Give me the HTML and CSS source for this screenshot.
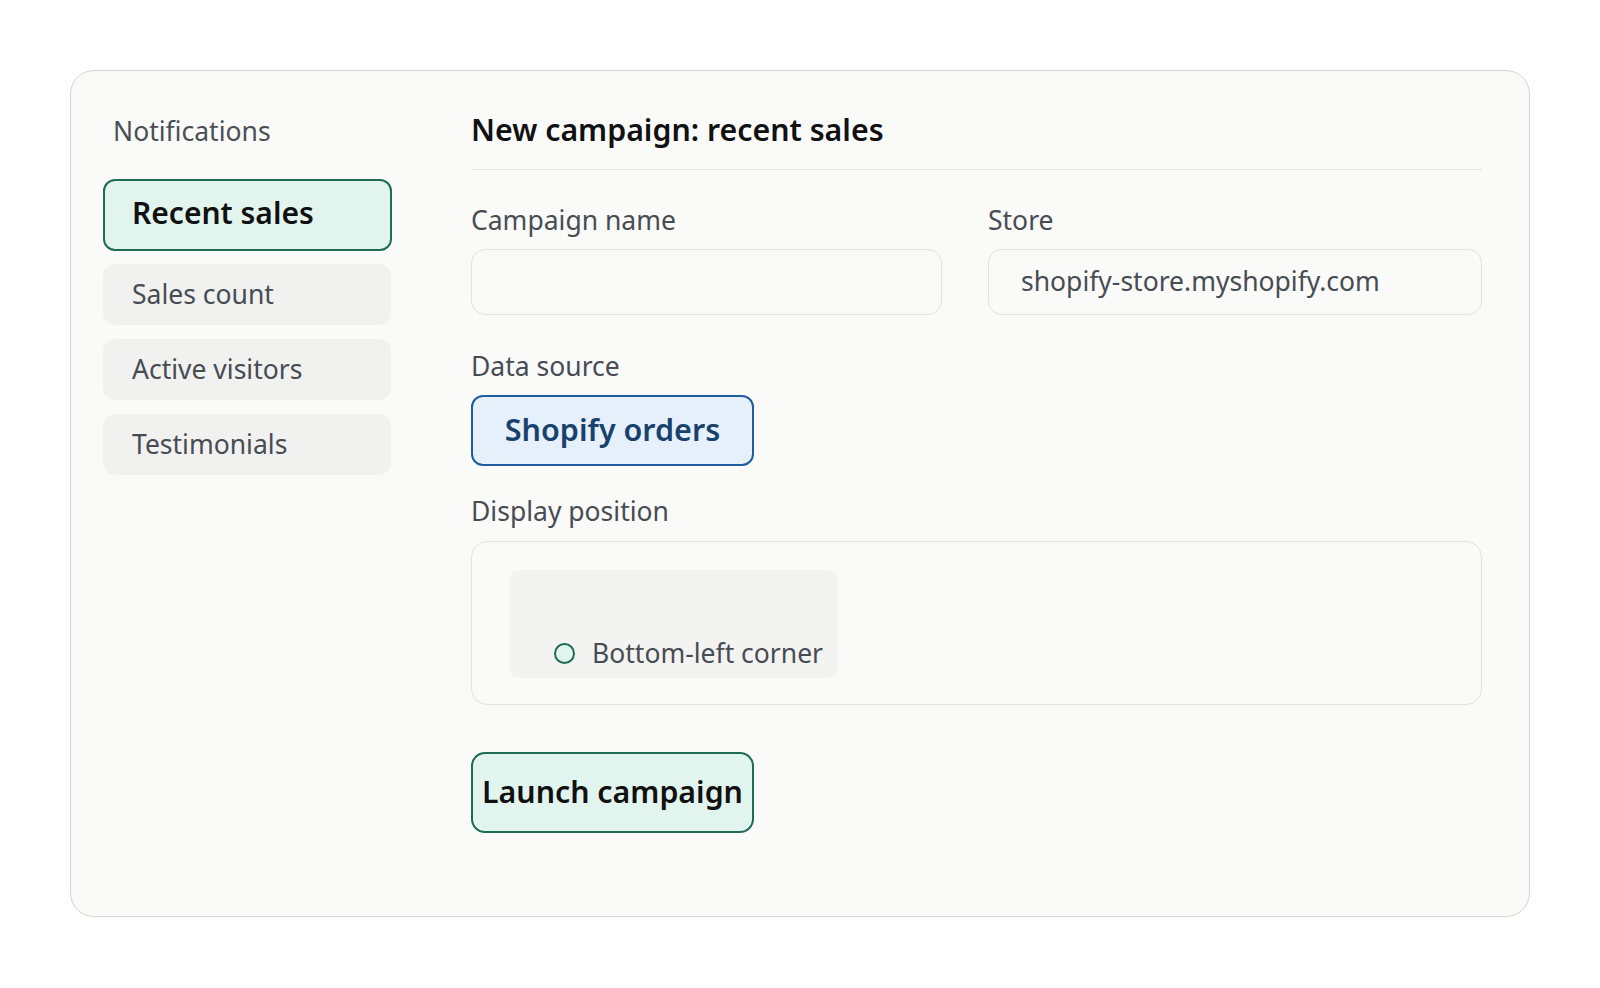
FILE: index.html
```html
<!DOCTYPE html>
<html lang="en">
<head>
<meta charset="utf-8">
<title>New campaign</title>
<link rel="stylesheet" href="styles.css">
</head>
<body>
<div class="card">
  <aside class="sidebar">
    <div class="side-title">Notifications</div>
    <nav class="nav">
      <div class="nav-item active">Recent sales</div>
      <div class="nav-item">Sales count</div>
      <div class="nav-item">Active visitors</div>
      <div class="nav-item">Testimonials</div>
    </nav>
  </aside>
  <main class="main">
    <h1 class="title">New campaign: recent sales</h1>
    <div class="fields">
      <div class="field">
        <div class="label">Campaign name</div>
        <div class="input"></div>
      </div>
      <div class="field">
        <div class="label">Store</div>
        <div class="input">shopify-store.myshopify.com</div>
      </div>
    </div>
    <div class="label label-source">Data source</div>
    <div class="chip">Shopify orders</div>
    <div class="label label-position">Display position</div>
    <div class="position-box">
      <div class="preview">
        <span class="radio"></span>
        <span class="radio-label">Bottom-left corner</span>
      </div>
    </div>
    <div class="launch">Launch campaign</div>
  </main>
</div>
</body>
</html>
```

FILE: styles.css
```css
* { box-sizing: border-box; }
html, body { margin: 0; padding: 0; background: #ffffff; }
body {
  font-family: "Noto Sans", "Open Sans", sans-serif;
  color: #474c53;
}
.card {
  margin: 70px 0 0 70px;
  width: 1460px;
  height: 847px;
  border: 1px solid #d3d3d3;
  border-radius: 24px;
  background: #fafaf9;
  display: flex;
  padding: 41px 47px 0 32px;
}
.sidebar {
  width: 289px;
  flex: none;
  padding-top: 3px;
}
.side-title {
  font-size: 26.5px;
  line-height: 32px;
  padding-left: 10px;
  color: #4a4f56;
}
.nav {
  margin-top: 32px;
  display: flex;
  flex-direction: column;
  gap: 14px;
}
.nav-item {
  height: 61px;
  border-radius: 12px;
  background: #f1f1f0;
  display: flex;
  align-items: center;
  padding-left: 29px;
  padding-bottom: 2px;
  font-size: 26.5px;
  line-height: 32px;
  color: #474c53;
  width: 288px;
}
.nav-item.active {
  height: 72px;
  width: 289px;
  padding-left: 27px;
  padding-bottom: 4px;
  border: 2px solid #1e6b56;
  background: #e1f4ee;
  color: #111111;
  font-weight: 600;
  font-size: 30px;
  line-height: 36px;
  margin-bottom: -1px;
}
.main {
  flex: 1;
  margin-left: 79px;
  display: flex;
  flex-direction: column;
  align-items: flex-start;
}
.title {
  margin: 0;
  width: 100%;
  font-size: 30.3px;
  line-height: 36px;
  font-weight: 600;
  color: #111111;
  padding-bottom: 21px;
  border-bottom: 1px solid #e3e3e2;
}
.fields {
  width: 100%;
  margin-top: 34px;
  display: grid;
  grid-template-columns: 471fr 494fr;
  column-gap: 46px;
}
.label {
  font-size: 26.5px;
  line-height: 32px;
  color: #474c53;
}
.input {
  margin-top: 13px;
  height: 66px;
  border: 1px solid #e2e2e1;
  border-radius: 14px;
  background: #fafaf9;
  padding-left: 32px;
  font-size: 26.5px;
  line-height: 62px;
  color: #474c53;
}
.label-source { margin-top: 35px; }
.chip {
  margin-top: 13px;
  width: 283px;
  height: 71px;
  border: 2px solid #1f5d9f;
  border-radius: 12px;
  background: #e6f0fb;
  color: #18426d;
  font-size: 30.5px;
  font-weight: 600;
  display: flex;
  align-items: center;
  justify-content: center;
  padding-bottom: 4px;
}
.label-position { margin-top: 29px; }
.position-box {
  margin-top: 14px;
  width: 100%;
  height: 164px;
  border: 1px solid #e2e2e1;
  border-radius: 16px;
  padding: 28px 37px;
}
.preview {
  width: 329px;
  height: 108px;
  border-radius: 10px;
  background: #f3f3f2;
  display: flex;
  align-items: flex-end;
  padding: 0 0 9px 45px;
  gap: 17px;
}
.radio {
  width: 21px;
  height: 21px;
  border: 2px solid #1e6b56;
  border-radius: 50%;
  background: #e1f4ee;
  flex: none;
  margin-bottom: 5px;
}
.radio-label {
  font-size: 26.5px;
  line-height: 32px;
  color: #474c53;
}
.launch {
  margin-top: 47px;
  width: 283px;
  height: 81px;
  border: 2px solid #1e6b56;
  border-radius: 14px;
  background: #e1f4ee;
  color: #111111;
  font-size: 30.3px;
  font-weight: 600;
  display: flex;
  align-items: center;
  justify-content: center;
  padding-bottom: 3px;
}
```
